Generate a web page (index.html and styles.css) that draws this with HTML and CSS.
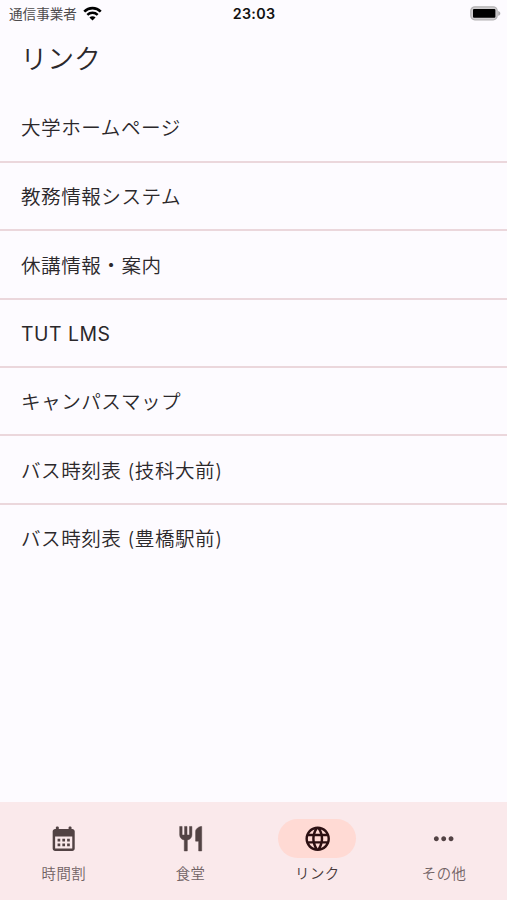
FILE: index.html
```html
<!DOCTYPE html>
<html lang="ja">
<head>
  <meta charset="UTF-8">
  <meta name="viewport" content="width=device-width, initial-scale=1.0">
  <title>リンク</title>
  <link rel="stylesheet" href="styles.css">
</head>
<body>
  <div class="status-bar">
    <div class="carrier">
      <span>通信事業者</span>
      <svg class="wifi" viewBox="0 0 18 14">
        <path d="M1.2 5.2a11 11 0 0 1 15.6 0" fill="none" stroke="#000" stroke-width="2.5"/>
        <path d="M4.1 8.3a7 7 0 0 1 9.8 0" fill="none" stroke="#000" stroke-width="2.3"/>
        <path d="M9 13.6 6.1 10.7a4.1 4.1 0 0 1 5.8 0z"/>
      </svg>
    </div>
    <div class="time">23:03</div>
    <div class="battery">
      <svg viewBox="0 0 31 15">
        <rect x=".8" y=".8" width="26.4" height="13" rx="4" fill="#d0ced0" stroke="#b4b2b4" stroke-width="1.2"/>
        <rect x="3" y="3" width="22.4" height="8.8" rx="1"/>
        <path d="M28.2 5c2.8.8 2.8 4 0 4.8z" fill="#aaa8aa"/>
      </svg>
    </div>
  </div>

  <header>
    <h1>リンク</h1>
  </header>

  <main>
    <ul class="link-list">
      <li>大学ホームページ</li>
      <li>教務情報システム</li>
      <li>休講情報・案内</li>
      <li class="latin">TUT LMS</li>
      <li>キャンパスマップ</li>
      <li>バス時刻表 (技科大前)</li>
      <li>バス時刻表 (豊橋駅前)</li>
    </ul>
  </main>

  <nav>
    <a class="nav-item">
      <span class="indicator">
        <svg viewBox="0 0 24 24">
          <path fill-rule="evenodd" d="M19 4h-.6V2.6a.9.9 0 0 0-.9-.6h-.6a.9.9 0 0 0-.9.6V4H8V2.6a.9.9 0 0 0-.9-.6h-.6a.9.9 0 0 0-.9.6V4H5c-1.1 0-2 .9-2 2v14c0 1.1.9 2 2 2h14c1.1 0 2-.9 2-2V6c0-1.1-.9-2-2-2zm0 16H5V10.2h14z"/>
          <path d="M7 12h2.2v2.2H7zm3.9 0h2.2v2.2h-2.2zm3.9 0H17v2.2h-2.2zM7 16h2.2v2.2H7zm3.9 0h2.2v2.2h-2.2zm3.9 0H17v2.2h-2.2z"/>
        </svg>
      </span>
      <span class="label">時間割</span>
    </a>
    <a class="nav-item">
      <span class="indicator">
        <svg viewBox="0 0 24 24">
          <path d="M11 9H9V2H7v7H5V2H3v7c0 2.12 1.66 3.84 3.75 3.97V22h2.5v-9.03C11.34 12.84 13 11.12 13 9V2h-2v7zm5-3v8h2.5v8H21V2c-2.76 0-5 2.24-5 4z" stroke="currentColor" stroke-width=".4"/>
        </svg>
      </span>
      <span class="label">食堂</span>
    </a>
    <a class="nav-item active">
      <span class="indicator">
        <svg viewBox="0 0 24 24">
          <path d="M11.99 2C6.47 2 2 6.48 2 12s4.47 10 9.99 10C17.52 22 22 17.52 22 12S17.52 2 11.99 2zm6.93 6h-2.95c-.32-1.25-.78-2.45-1.38-3.56 1.84.63 3.37 1.91 4.33 3.56zM12 4.04c.83 1.2 1.48 2.53 1.91 3.96h-3.82c.43-1.43 1.08-2.76 1.91-3.96zM4.26 14C4.1 13.36 4 12.69 4 12s.1-1.36.26-2h3.38c-.08.66-.14 1.32-.14 2s.06 1.34.14 2H4.26zm.82 2h2.95c.32 1.25.78 2.45 1.38 3.56-1.84-.63-3.37-1.9-4.33-3.56zm2.95-8H5.08c.96-1.66 2.49-2.93 4.33-3.56C8.81 5.55 8.35 6.75 8.03 8zM12 19.96c-.83-1.2-1.48-2.53-1.91-3.96h3.82c-.43 1.43-1.08 2.76-1.91 3.96zM14.34 14H9.66c-.09-.66-.16-1.32-.16-2s.07-1.35.16-2h4.68c.09.65.16 1.32.16 2s-.07 1.34-.16 2zm.25 5.56c.6-1.11 1.06-2.31 1.38-3.56h2.95c-.96 1.65-2.49 2.93-4.33 3.56zM16.36 14c.08-.66.14-1.32.14-2s-.06-1.34-.14-2h3.38c.16.64.26 1.31.26 2s-.1 1.36-.26 2h-3.38z"/>
        </svg>
      </span>
      <span class="label">リンク</span>
    </a>
    <a class="nav-item">
      <span class="indicator">
        <svg viewBox="0 0 24 24">
          <path d="M6 10c-1.1 0-2 .9-2 2s.9 2 2 2 2-.9 2-2-.9-2-2-2zm12 0c-1.1 0-2 .9-2 2s.9 2 2 2 2-.9 2-2-.9-2-2-2zm-6 0c-1.1 0-2 .9-2 2s.9 2 2 2 2-.9 2-2-.9-2-2-2z"/>
        </svg>
      </span>
      <span class="label">その他</span>
    </a>
  </nav>
</body>
</html>
```
FILE: styles.css
```css
* {
  box-sizing: border-box;
}

body {
  margin: 0;
  height: 900px;
  display: flex;
  flex-direction: column;
  background-color: #fdfbff;
  color: #2b282b;
  font-family: Inter, "Noto Sans CJK JP", sans-serif;
}

.status-bar {
  display: grid;
  grid-template-columns: 1fr auto 1fr;
  align-items: center;
  height: 27px;
  padding: 0 6px 0 9px;
}

.carrier {
  display: flex;
  align-items: center;
  gap: 6px;
  font-size: 13.6px;
  line-height: 20px;
  color: #4c4a4c;
}

.wifi {
  width: 19px;
  height: 15px;
}

.time {
  padding-right: 2px;
  font-size: 14.3px;
  font-weight: 600;
  letter-spacing: 0.3px;
  color: #111;
}

.battery {
  display: flex;
  justify-content: flex-end;
}

.battery svg {
  width: 31px;
  height: 15px;
}

header {
  display: flex;
  align-items: center;
  height: 65.4px;
  padding: 0 20.5px 1px;
}

h1 {
  margin: 0;
  font-size: 26.8px;
  font-weight: 350;
  line-height: 34px;
}

main {
  flex: 1;
}

.link-list {
  margin: 0;
  padding: 0;
  list-style: none;
}

.link-list li {
  display: flex;
  align-items: center;
  height: 68.4px;
  padding: 0 21px 0.5px;
  font-size: 19.6px;
  font-weight: 350;
  letter-spacing: 0.5px;
}

.link-list .latin {
  padding: 2px 21px 0;
  font-size: 19.4px;
  font-weight: 400;
}

.link-list li + li {
  border-top: 2px solid #ebd7dc;
}

nav {
  display: flex;
  height: 98px;
  padding-top: 17px;
  background-color: #fae9eb;
}

.nav-item {
  flex: 1;
  display: flex;
  flex-direction: column;
  align-items: center;
  gap: 6px;
  color: #524344;
}

.indicator {
  display: flex;
  align-items: center;
  justify-content: center;
  width: 78px;
  height: 39px;
  padding-left: 1px;
  border-radius: 20px;
}

.indicator svg {
  width: 29.4px;
  height: 29.4px;
  fill: currentColor;
}

.label {
  padding-left: 1px;
  font-size: 14.4px;
  font-weight: 350;
  line-height: 20px;
  letter-spacing: 0.5px;
  color: #716264;
}

.active .indicator {
  background-color: #ffdad4;
  color: #2c1012;
}

.active .label {
  color: #473839;
}
```
